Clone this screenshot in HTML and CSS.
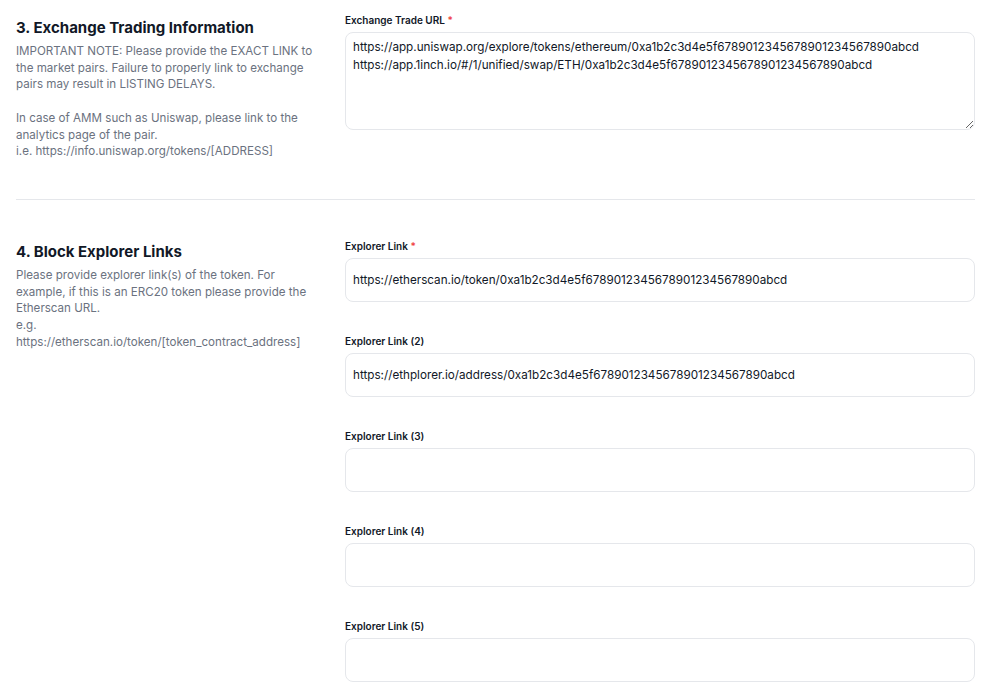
FILE: index.html
```html
<!DOCTYPE html>
<html lang="en">
<head>
  <meta charset="UTF-8">
  <meta name="viewport" content="width=device-width, initial-scale=1.0">
  <title>Token Listing Form</title>
  <link rel="stylesheet" href="styles.css">
</head>
<body>

  <div class="form">

    <!-- Section 3 -->
    <div class="section first">
      <div class="intro">
        <h2>3. Exchange Trading Information</h2>
        <p>IMPORTANT NOTE: Please provide the EXACT LINK to the market pairs. Failure to properly link to exchange pairs may result in LISTING DELAYS.</p>
        <p class="gap">In case of AMM such as Uniswap, please link to the analytics page of the pair.<br>i.e. https://info.uniswap.org/tokens/[ADDRESS]</p>
      </div>
      <div class="fields">
        <div class="field">
          <label for="tradeUrl">Exchange Trade URL <span class="req">*</span></label>
          <textarea id="tradeUrl" rows="5">https://app.uniswap.org/explore/tokens/ethereum/0xa1b2c3d4e5f6789012345678901234567890abcd
https://app.1inch.io/#/1/unified/swap/ETH/0xa1b2c3d4e5f6789012345678901234567890abcd</textarea>
        </div>
      </div>
    </div>

    <!-- Section 4 -->
    <div class="section">
      <div class="intro">
        <h2>4. Block Explorer Links</h2>
        <p>Please provide explorer link(s) of the token. For example, if this is an ERC20 token please provide the Etherscan URL.<br>e.g.<br>https://etherscan.io/token/[token_contract_address]</p>
      </div>
      <div class="fields">
        <div class="field">
          <label for="ex1">Explorer Link <span class="req">*</span></label>
          <input type="text" id="ex1" value="https://etherscan.io/token/0xa1b2c3d4e5f6789012345678901234567890abcd">
        </div>
        <div class="field">
          <label for="ex2">Explorer Link (2)</label>
          <input type="text" id="ex2" value="https://ethplorer.io/address/0xa1b2c3d4e5f6789012345678901234567890abcd">
        </div>
        <div class="field">
          <label for="ex3">Explorer Link (3)</label>
          <input type="text" id="ex3">
        </div>
        <div class="field">
          <label for="ex4">Explorer Link (4)</label>
          <input type="text" id="ex4">
        </div>
        <div class="field">
          <label for="ex5">Explorer Link (5)</label>
          <input type="text" id="ex5">
        </div>
      </div>
    </div>

  </div>

</body>
</html>
```

FILE: styles.css
```css
body {
  font-family: Inter, "Noto Sans", sans-serif;
  margin: 0;
  padding: 0;
  background-color: #fff;
  color: #111827;
}
.form {
  padding: 0 19px 0 16px;
}
.section {
  display: grid;
  grid-template-columns: 305px minmax(0, 1fr);
  column-gap: 24px;
  padding: 40px 0 16px;
}
.section.first {
  padding-top: 14px;
  padding-bottom: 39px;
  border-bottom: 1px solid #e5e7eb;
}
.intro {
  padding-top: 2px;
}
.section.first .intro {
  padding-top: 4px;
}
.intro h2 {
  margin: 0 0 6px;
  font-size: 15px;
  font-weight: 700;
  color: #111827;
}
.intro p {
  margin: 0;
  font-size: 11.6px;
  line-height: 16.7px;
  color: #6b7280;
}
.intro p.gap {
  margin-top: 16.7px;
}
.fields {
  display: flex;
  flex-direction: column;
  gap: 33px;
}
.field label {
  display: block;
  font-size: 10px;
  line-height: 13px;
  font-weight: 600;
  color: #111827;
  margin-bottom: 5px;
}
.req {
  color: #ef4444;
}
.field input,
.field textarea {
  display: block;
  box-sizing: border-box;
  width: 100%;
  font-family: inherit;
  font-size: 11.7px;
  color: #111827;
  border: 1px solid #e5e7eb;
  border-radius: 8px;
  background: #fff;
  outline: none;
}
.field input {
  height: 44px;
  padding: 0 7px;
}
.field textarea {
  height: 98px;
  padding: 5px 7px;
  line-height: 18px;
  resize: vertical;
}
```
